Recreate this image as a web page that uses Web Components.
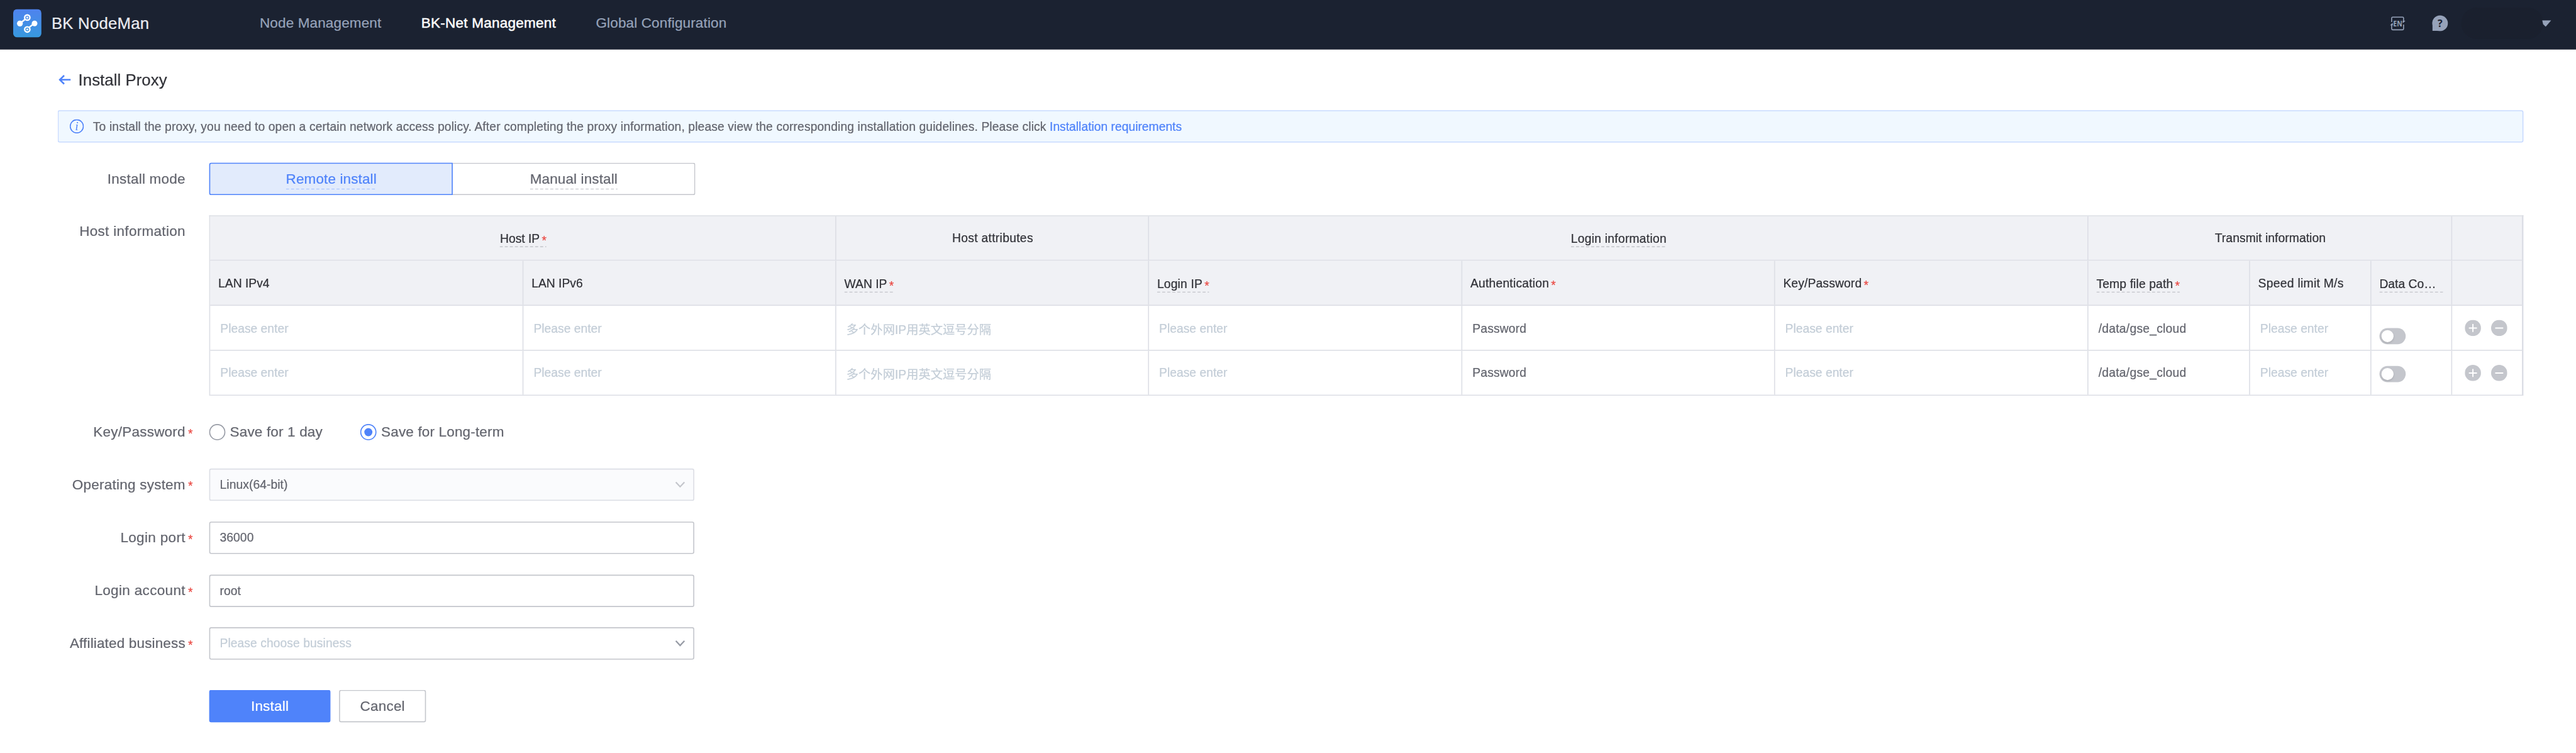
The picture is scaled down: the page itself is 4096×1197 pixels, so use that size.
<!DOCTYPE html>
<html lang="en">
<head>
<meta charset="utf-8">
<title>BK NodeMan - Install Proxy</title>
<style>
html,body{margin:0;padding:0;width:4096px;height:1197px;background:#fff}
body{font-family:"Liberation Sans","Noto Sans CJK SC",sans-serif;color:#63656e;-webkit-text-stroke-width:.3px;
--blue:#4f83fa;--red:#ea4a44;--line:#dcdee5;--edge:#c4c6cc;--hint:#c3cdd7;--ink:#313238}
</style>
</head>
<body>
<nm-app></nm-app>
<script>
const define=(name,css,html)=>customElements.define(name,class extends HTMLElement{
  constructor(){super();
    const t=document.createElement('template');
    t.innerHTML=`<style>*{box-sizing:border-box}${css}</style>${typeof html==='function'?html(this):html}`;
    this.attachShadow({mode:'open'}).append(t.content.cloneNode(true));}
});

define('nm-star',`:host{display:inline-block;font-size:24px;line-height:24px;letter-spacing:0;color:var(--red);position:relative;top:4px;margin-left:4px}`,`*`);

define('nm-tip',`:host{display:inline-block;white-space:nowrap}
svg{display:block;width:0;min-width:100%;height:2px;overflow:hidden}
div{line-height:var(--tip-line,30px)}`,
`<div><slot></slot></div><svg><line x1="0" y1="1" x2="100%" y2="1" stroke="var(--dash,#c4c6cc)" stroke-width="2" stroke-dasharray="6 4"/></svg>`);

define('nm-header',`:host{display:flex;align-items:center;height:98px;padding:0 49px 6px 26px;background:#1b2231;color:#96a2b9;font-size:28px}
.logo{width:56px;height:56px;display:block}
h1{margin:0 0 0 20px;font-size:32px;font-weight:400;color:#eaebf0;width:412px;line-height:40px;letter-spacing:.3px}
nav{display:flex;gap:79px;flex:1;letter-spacing:.17px}
.on{color:#fff;-webkit-text-stroke:.6px #fff;letter-spacing:.3px}
.en{width:32px;height:32px;margin-right:52px}
.help{width:32px;height:32px;margin-right:26px}
.user{width:162px;height:62px;border-radius:31px;background:#1a202e}
.caret{width:18px;height:13px;margin-left:-2px}`,
`<svg class="logo" viewBox="0 0 56 56"><defs><linearGradient id="g" x2="0" y2="1"><stop stop-color="#4f83ee"/><stop offset="1" stop-color="#3799de"/></linearGradient></defs>
<rect width="56" height="56" rx="8" fill="url(#g)"/><g stroke="#fff" fill="none" stroke-width="3"><path d="M14 28 24 20M42 28 32 36"/><circle cx="28" cy="16.700" r="5.200"/><circle cx="28" cy="40.200" r="5.200"/></g><g fill="#fff"><circle cx="13.400" cy="28.500" r="5.800"/><circle cx="42.400" cy="28.400" r="5.600"/><circle cx="28" cy="16.700" r="2"/><circle cx="28" cy="40.200" r="2"/></g></svg>
<h1>BK NodeMan</h1>
<nav><span>Node Management</span><span class="on">BK-Net Management</span><span>Global Configuration</span></nav>
<svg class="en" viewBox="0 0 32 32"><path fill="none" stroke="#96a2b9" stroke-width="2" d="M4.200 13.500V6Q4.200 4 6.200 4H25.800Q27.800 4 27.800 6V14M27.800 18.500V27Q27.800 29 25.800 29H6.200Q4.200 29 4.200 27V17"/><path d="M1 20 6.500 15V20ZM31.500 11 26 16V11Z" fill="#96a2b9"/><text x="16.200" y="22" text-anchor="middle" textLength="18" lengthAdjust="spacingAndGlyphs" font-family="Open Sans" font-weight="700" font-size="14.500" fill="#96a2b9">EN</text></svg>
<svg class="help" viewBox="0 0 32 32"><path d="M16 .5A15.500 15.500 0 1 1 16 31.500L10 31H1V20A15.500 15.500 0 0 1 16 .5Z" fill="#96a2b9"/><text x="16" y="23.500" text-anchor="middle" font-family="Open Sans" font-weight="700" font-size="20" fill="#1b2231">?</text></svg>
<div class="user"></div>
<svg class="caret" viewBox="0 0 18 13"><path d="M0 0H18L7 13 2 8Z" fill="#96a2b9"/></svg>`);

define('nm-title',`:host{display:flex;align-items:center;height:40px;font-size:32px;letter-spacing:.1px;color:var(--ink)}
svg{width:24px;height:20px;margin:0 15px 0 2px}`,
`<svg viewBox="0 0 24 20"><path d="M11 1.300 2.300 9.700 11 18.100M2.300 9.700H24" fill="none" stroke="#4f83fa" stroke-width="3.200"/></svg><span><slot></slot></span>`);

define('nm-alert',`:host{display:flex;align-items:center;height:64px;padding-left:22px;background:#f0f8ff;border:2px solid #c8daff;border-radius:4px;font-size:24px;letter-spacing:.14px;white-space:pre}
svg{width:28px;height:28px;margin-right:18px}span{padding-top:1px}`,
`<svg viewBox="0 0 28 28"><circle cx="14" cy="14" r="13" fill="none" stroke="#4f83fa" stroke-width="2"/><text x="14" y="21.500" text-anchor="middle" font-family="Liberation Serif" font-style="italic" font-size="23" fill="#4f83fa">i</text></svg><span><slot></slot></span>`);

define('nm-row',`:host{display:grid;grid-template-columns:253px 47px 1fr;align-items:start}
label{font-size:28px;line-height:64px;text-align:right;white-space:nowrap;letter-spacing:var(--track,.3px)}
i{font-style:normal;font-size:24px;line-height:64px;color:var(--red);padding:3px 0 0 5px;height:64px}
.body{display:flex;min-width:0;min-height:64px;align-items:center}`,
el=>`<label>${el.getAttribute('label')||''}</label><i>${el.hasAttribute('required')?'*':''}</i><div class="body"><slot></slot></div>`);

define('nm-mode',`:host{display:flex;font-size:28px;letter-spacing:.15px;--tip-line:37px}
div{height:64px;display:flex;justify-content:center;padding:12px 0 0 1px;border:2px solid var(--edge)}
.a{width:482px;border-color:var(--blue);background:#e2ebfc;color:var(--blue);border-radius:4px 0 0 4px;--dash:#a9c5ff}
.b{width:480px;border-left:0;border-radius:0 4px 4px 0}`,
`<div class="a"><nm-tip>Remote install</nm-tip></div><div class="b"><nm-tip>Manual install</nm-tip></div>`);

define('nm-radio',`:host{display:flex;align-items:center;font-size:28px;gap:9px;letter-spacing:.2px}
i{width:32px;height:32px;border-radius:50%;border:2px solid #979ba5;display:grid;place-items:center}
:host([on]) i{border-color:var(--blue)}
:host([on]) i::after{content:"";width:16px;height:16px;border-radius:50%;background:var(--blue)}`,
`<i></i><span><slot></slot></span>`);

define('nm-input',`:host{display:flex;align-items:center;justify-content:space-between;width:960px;height:64px;border:2px solid var(--edge);border-radius:4px;padding:0 16px 0 19px;font-size:24px;letter-spacing:.08px}
:host([disabled]){background:#fafbfd;border-color:var(--line);--chev:#c4c6cc}
:host([hint]) span{color:var(--hint)}
svg{width:20px;height:14px}`,
el=>`<span><slot></slot></span>${el.hasAttribute('select')?'<svg viewBox="0 0 20 14"><path d="M1.500 2 10 11 18.500 2" fill="none" stroke="var(--chev,#979ba5)" stroke-width="2.800"/></svg>':''}`);

define('nm-button',`:host{display:flex;align-items:center;justify-content:center;height:64px;width:172px;border:2px solid var(--edge);border-radius:4px;font-size:28px;letter-spacing:.25px}
:host([primary]){width:240px;background:var(--blue);border-color:var(--blue);color:#fff}`,`<slot></slot>`);

define('nm-switch',`:host{display:block;width:52px;height:32px;border-radius:16px;background:var(--edge);padding:4px}
i{display:block;width:24px;height:24px;border-radius:50%;background:#fff;box-shadow:0 2px 4px #0002}`,`<i></i>`);

define('nm-ops',`:host{display:flex;gap:20px}svg{width:32px;height:32px;display:block}`,
['M8 16H24M16 8V24','M8 16H24'].map(d=>`<svg viewBox="0 0 32 32"><circle cx="16" cy="16" r="16" fill="#c4c6cc"/><path d="${d}" stroke="#fff" stroke-width="2.400"/></svg>`).join(''));

const hint='<span class="h">Please enter</span>';
const bodyRow=n=>`<div class="row r${n}">
<div>${hint}</div><div>${hint}</div><div><span class="h">多个外网IP用英文逗号分隔</span></div><div>${hint}</div><div><span class="v">Password</span></div><div>${hint}</div><div><span class="v w">/data/gse_cloud</span></div><div>${hint}</div><div class="sw"><nm-switch></nm-switch></div><div class="op"><nm-ops></nm-ops></div></div>`;
define('nm-table',`:host{display:block;width:4580px;border:2px solid var(--line);border-right-width:3px;border-bottom:0;font-size:24px}
.row{display:grid;grid-template-columns:620px 619px 619px 620px 619px 620px 320px 240px 160px 1fr;height:89px;border-bottom:2px solid var(--line)}
.row>div{display:flex;align-items:center;border-right:2px solid var(--line);padding-left:20px;white-space:nowrap;min-width:0}
.row>div:last-child{border-right:0}
.head{background:#f0f1f5;color:var(--ink)}
.row.head>div{padding:2px 0 0 16px;letter-spacing:var(--ls,0)}
.group{grid-template-columns:1239px 619px 1859px 720px 1fr;height:88px}
.row.group>div{justify-content:center;padding:0 0 0 2px}
nm-tip{margin-top:4px}
.h{color:var(--hint)}.v{letter-spacing:.2px}.w{letter-spacing:.3px}
.r1 span{padding-top:4px}.r2 span{padding-top:1px}
.row>.sw{padding-left:16px;align-items:flex-start}.r1>.sw{padding-top:44px}.r2>.sw{padding-top:30px}
.row>.op{padding-left:25px}
.dc{width:126px}`,
`<div class="row head group"><div><nm-tip>Host IP<nm-star></nm-star></nm-tip></div><div style="--ls:.38px">Host attributes</div><div style="--ls:.3px"><nm-tip>Login information</nm-tip></div><div style="--ls:.08px">Transmit information</div><div></div></div>
<div class="row head"><div>LAN IPv4</div><div>LAN IPv6</div><div><nm-tip>WAN IP<nm-star></nm-star></nm-tip></div><div style="--ls:.2px"><nm-tip>Login IP<nm-star></nm-star></nm-tip></div><div style="--ls:.25px">Authentication<nm-star></nm-star></div><div style="--ls:.17px">Key/Password<nm-star></nm-star></div><div style="--ls:.15px"><nm-tip>Temp file path<nm-star></nm-star></nm-tip></div><div style="--ls:.35px">Speed limit M/s</div><div><nm-tip class="dc">Data Co…</nm-tip></div><div></div></div>
${bodyRow(1)}${bodyRow(2)}`);

define('nm-app',`:host{display:block;width:4096px;height:1197px;overflow:hidden;contain:strict;background:#fff}
.page{width:5098px;height:1489px;transform:scale(.80345);transform-origin:0 0}
main{padding:40px 104px 0 114px;display:flex;flex-direction:column}
nm-alert{margin-top:40px}
.m{margin-top:40px}.k{margin-top:40px}.o{margin-top:40px}.p{margin-top:41px}
.btn{margin-top:60px}
a{color:var(--blue);letter-spacing:0}
nm-radio+nm-radio{margin-left:75px}nm-button+nm-button{margin-left:17px}`,
`<div class="page"><nm-header></nm-header><main><nm-title>Install Proxy</nm-title>
<nm-alert>To install the proxy, you need to open a certain network access policy. After completing the proxy information, please view the corresponding installation guidelines. Please click <a>Installation requirements</a></nm-alert>
<nm-row class="m" label="Install mode"><nm-mode></nm-mode></nm-row>
<nm-row class="m" label="Host information" style="--track:.38px"><nm-table></nm-table></nm-row>
<nm-row class="k" label="Key/Password" required><nm-radio>Save for 1 day</nm-radio><nm-radio on>Save for Long-term</nm-radio></nm-row>
<nm-row class="o" label="Operating system" required><nm-input select disabled>Linux(64-bit)</nm-input></nm-row>
<nm-row class="p" label="Login port" required style="--track:.42px"><nm-input>36000</nm-input></nm-row>
<nm-row class="p" label="Login account" required style="--track:.42px"><nm-input>root</nm-input></nm-row>
<nm-row class="o" label="Affiliated business" required style="--track:.2px"><nm-input select hint>Please choose business</nm-input></nm-row>
<nm-row class="btn"><nm-button primary>Install</nm-button><nm-button>Cancel</nm-button></nm-row>
</main></div>`);
</script>
</body>
</html>
